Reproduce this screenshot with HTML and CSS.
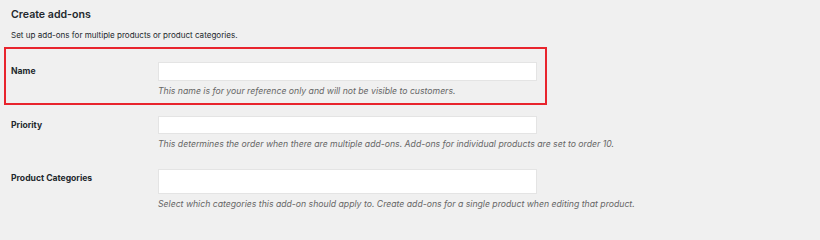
FILE: index.html
```html
<!DOCTYPE html>
<html lang="en">
<head>
<meta charset="utf-8">
<title>Create add-ons</title>
<link rel="stylesheet" href="styles.css">
</head>
<body>
<div class="page">
  <h2 class="title">Create add-ons</h2>
  <p class="intro">Set up add-ons for multiple products or product categories.</p>
  <div class="form">
    <div class="row row-highlight">
      <label class="label" for="addon-name">Name</label>
      <div class="field">
        <input class="input" id="addon-name" type="text">
        <p class="desc">This name is for your reference only and will not be visible to customers.</p>
      </div>
    </div>
    <div class="row">
      <label class="label" for="addon-priority">Priority</label>
      <div class="field">
        <input class="input input-short" id="addon-priority" type="text">
        <p class="desc">This determines the order when there are multiple add-ons. Add-ons for individual products are set to order 10.</p>
      </div>
    </div>
    <div class="row">
      <label class="label" for="addon-cats">Product Categories</label>
      <div class="field">
        <div class="select" id="addon-cats"></div>
        <p class="desc">Select which categories this add-on should apply to. Create add-ons for a single product when editing that product.</p>
      </div>
    </div>
  </div>
</div>
</body>
</html>
```

FILE: styles.css
```css
html, body {
  margin: 0;
  padding: 0;
  background: #f0f0f0;
}
body {
  font-family: Inter, "Open Sans", "Liberation Sans", sans-serif;
  color: #23282d;
  font-size: 8.5px;
}
.page {
  padding: 0;
}
.title {
  margin: 0;
  padding: 8px 0 0 11px;
  font-size: 10.6px;
  line-height: 14px;
  font-weight: 600;
}
.intro {
  margin: 0;
  padding: 7px 0 0 11px;
  font-size: 8.05px;
  line-height: 12px;
}
.form {
  margin-top: 8px;
  display: flex;
  flex-direction: column;
}
.row {
  display: flex;
  width: 539px;
  margin-left: 6px;
  padding: 13px 0 6px 5px;
  box-sizing: border-box;
}
.row-highlight {
  outline: 2px solid #e8242d;
}
.label {
  width: 147px;
  flex: none;
  margin-top: 3px;
  font-weight: 700;
  font-size: 8.6px;
  line-height: 12px;
}
.field {
  flex: none;
  width: 379px;
}
.input {
  display: block;
  width: 379px;
  height: 19px;
  margin: 0;
  padding: 0 5px;
  box-sizing: border-box;
  background: #fff;
  border: 1px solid #e4e4e4;
  border-radius: 0;
  outline: none;
}
.input-short {
  height: 18px;
}
.select {
  width: 379px;
  height: 25px;
  box-sizing: border-box;
  background: #fff;
  border: 1px solid #e4e4e4;
}
.desc {
  margin: 4px 0 0;
  font-style: italic;
  color: #666;
  font-size: 8.68px;
  line-height: 12px;
  white-space: nowrap;
}
```
